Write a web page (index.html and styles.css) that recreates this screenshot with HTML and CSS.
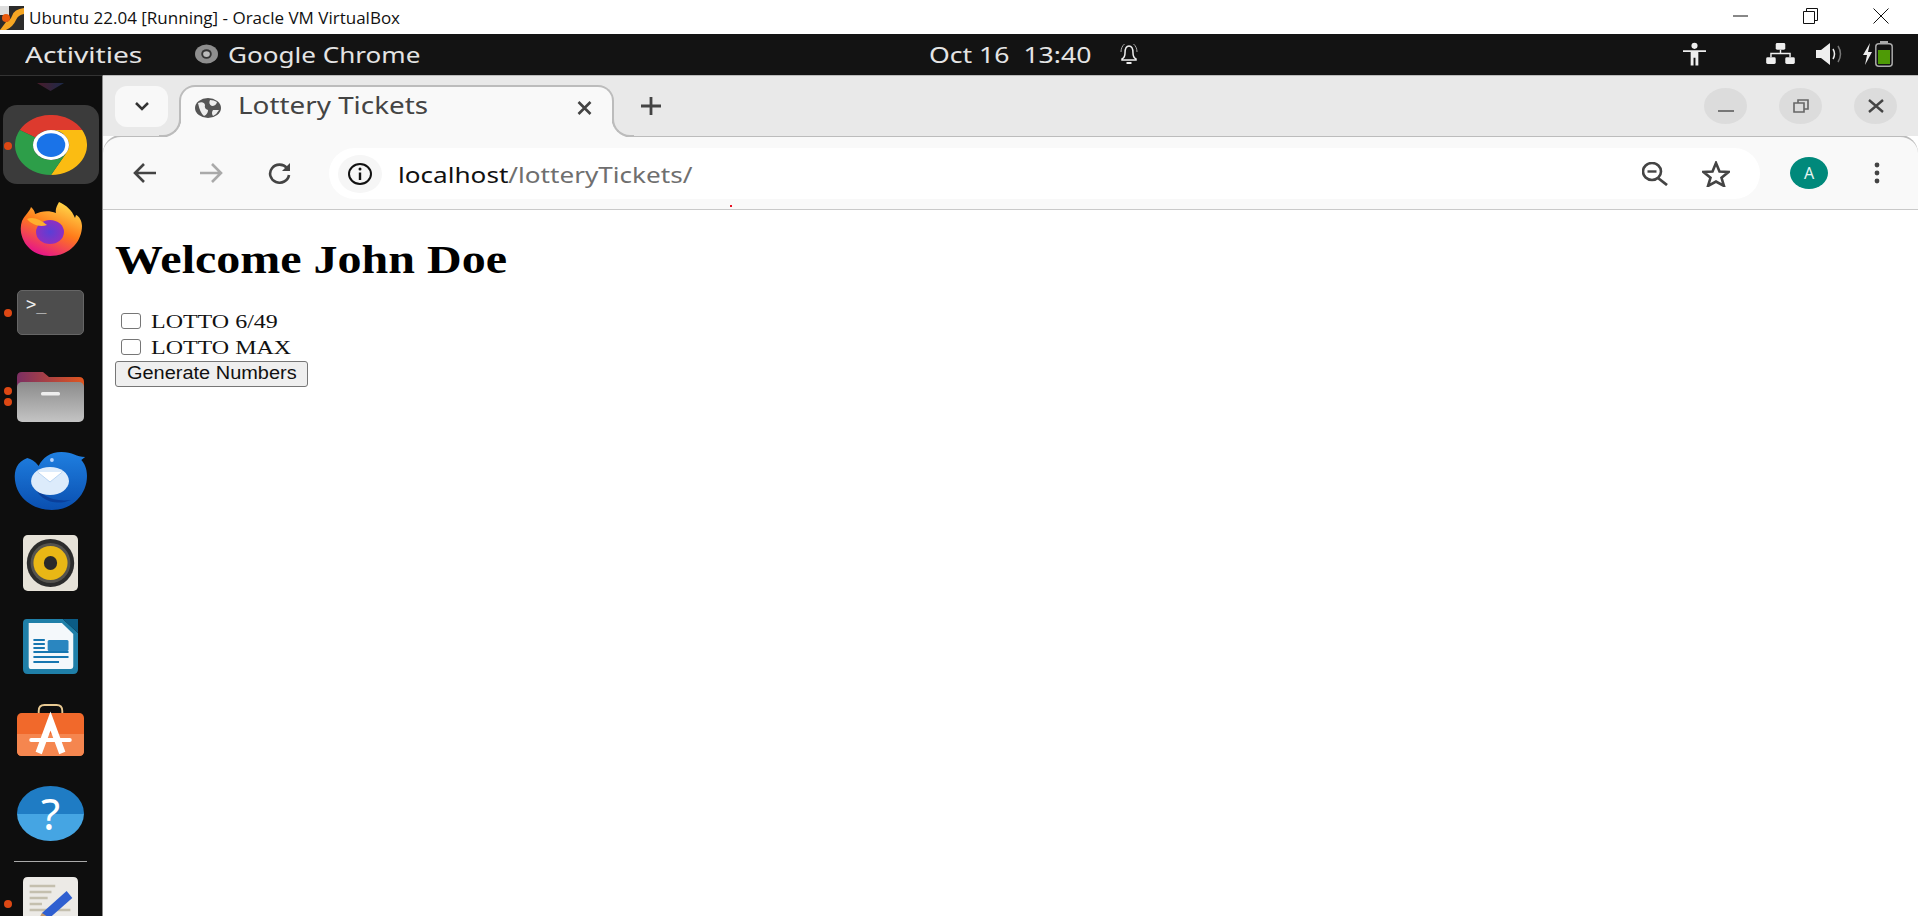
FILE: index.html
```html
<!DOCTYPE html>
<html lang="en">
<head>
<meta charset="utf-8">
<title>Ubuntu 22.04 [Running] - Oracle VM VirtualBox</title>
<link rel="stylesheet" href="styles.css">
</head>
<body>
<div class="screen">
  <header class="vbox-title">
    <svg class="vbox-logo" viewBox="0 0 24 24"><rect width="24" height="24" fill="#2b2b2b"/><rect width="9" height="9" fill="#ddd"/><path d="M0 24 L6 16 Q10 15 12 10 Q14 3 24 2 V8 Q18 9 16 14 Q13 21 6 24Z" fill="#f5a623"/><circle cx="6" cy="12" r="4" fill="#e8590c"/></svg>
    <span class="vbox-text">Ubuntu 22.04 [Running] - Oracle VM VirtualBox</span>
    <div class="vbox-controls">
      <svg class="vbox-ctl" viewBox="0 0 16 16"><path d="M0 8H15" stroke="#111" fill="none"/></svg>
      <svg class="vbox-ctl" viewBox="0 0 16 16"><path d="M.5 3.5H11.5V15.5H.5ZM3.5 3.5V.5H14.5V12.5H11.5" stroke="#111" fill="none"/></svg>
      <svg class="vbox-ctl" viewBox="0 0 16 16"><path d="M.5.5L15.5 15.5M15.5.5L.5 15.5" stroke="#111" fill="none"/></svg>
    </div>
  </header>

  <div class="topbar">
    <div class="tb-cell"><span class="wide tb-activities">Activities</span></div>
    <div class="tb-cell tb-app">
      <svg class="tb-chrome" viewBox="0 0 24 20"><ellipse cx="12" cy="10" rx="12" ry="10" fill="#8e8e8e"/><ellipse cx="12" cy="10" rx="5.5" ry="5" fill="#333"/><ellipse cx="12" cy="10" rx="3.5" ry="3" fill="#bbb"/></svg>
      <span class="wide tb-appname">Google Chrome</span>
    </div>
    <div class="tb-cell tb-clock">
      <span class="wide tb-time">Oct 16&nbsp;&nbsp;13:40</span>
      <svg class="tb-bell" viewBox="0 0 20 22"><path d="M10 3C6.500 3 6 6 6 10C6 13 5 15 3 16V17H17V16C15 15 14 13 14 10C14 6 13.500 3 10 3Z" fill="none" stroke="#eee" stroke-width="1.500"/><path d="M2 9C2 6 3 3 5.500 1M18 9C18 6 17 3 14.500 1" fill="none" stroke="#aaa"/><path d="M7.500 20H12.500" stroke="#eee" stroke-width="2"/></svg>
    </div>
    <div class="tb-status">
      <svg class="tb-a11y" viewBox="0 0 24 24"><circle cx="12" cy="3.500" r="3.200" fill="#eee"/><path d="M0 8H24V10H16V24H13V16H11V24H8V10H0Z" fill="#eee"/></svg>
      <svg class="tb-net" viewBox="0 0 30 22"><rect x="10" y="0" width="10" height="7" rx="1.500" fill="#eee"/><rect x="0" y="15" width="10" height="7" rx="1.500" fill="#eee"/><rect x="20" y="15" width="10" height="7" rx="1.500" fill="#eee"/><path d="M15 7V11M5 15V11H25V15" stroke="#eee" stroke-width="1.500" fill="none"/></svg>
      <svg class="tb-vol" viewBox="0 0 27 22"><path d="M0 7H5L14 0V22L5 15H0Z" fill="#eee"/><path d="M17 6Q20 11 17 16" stroke="#eee" stroke-width="1.500" fill="none"/><path d="M22 3Q27 11 22 19" stroke="#777" stroke-width="1.500" fill="none"/></svg>
      <svg class="tb-batt" viewBox="0 0 30 26"><path d="M7 2L0 14H4L2 24L9 11H5Z" fill="#eee"/><rect x="12.800" y="2.800" width="16.400" height="22.400" rx="3" fill="none" stroke="#aaa" stroke-width="1.500"/><rect x="17" y="0" width="8" height="3" fill="#aaa"/><rect x="15" y="9" width="12" height="14" fill="#4e9a06"/></svg>
    </div>
  </div>

  <div class="desk">
    <nav class="dock">
      <div class="dock-stub"></div>
      <div class="dock-slot active">
        <i class="dot"></i>
        <svg class="ic-chrome" viewBox="0 0 48 48" preserveAspectRatio="none">
          <path d="M3.200 12A24 24 0 0 1 44.800 12H24A12 12 0 0 0 13.600 18Z" fill="#dd3a2e"/>
          <path d="M44.800 12A24 24 0 0 1 24 48L34.400 30A12 12 0 0 0 24 12Z" fill="#fbbc12"/>
          <path d="M3.200 12A24 24 0 0 0 24 48L34.400 30A12 12 0 0 1 13.600 18Z" fill="#2d9e49"/>
          <circle cx="24" cy="24" r="12" fill="#fff"/><circle cx="24" cy="24" r="9.500" fill="#1a73e8"/>
        </svg>
      </div>
      <div class="dock-slot">
        <svg class="ic-firefox" viewBox="0 0 63 54" preserveAspectRatio="none">
          <defs>
            <linearGradient id="ffa" x1="0.800" y1="0" x2="0.300" y2="1"><stop offset="0" stop-color="#ffe14d"/><stop offset=".5" stop-color="#ff7a1a"/><stop offset="1" stop-color="#e5108f"/></linearGradient>
            <radialGradient id="ffb"><stop offset="0" stop-color="#5a3fd6"/><stop offset="1" stop-color="#8f2fc0"/></radialGradient>
          </defs>
          <path d="M40 0C38 4 36 7 37 11C30 8 22 9 16 12C16 9 14 7 12 5C11 9 6 13 3 19C-2 33 8 54 31 54C52 54 63 38 63 24C63 19 60 14 57 13L56 16C53 8 47 3 40 0Z" fill="url(#ffa)"/>
          <ellipse cx="31" cy="30" rx="14" ry="12" fill="url(#ffb)"/>
          <path d="M8 17C14 14 22 18 28 23C22 25 14 24 8 17Z" fill="#ffb02e"/>
        </svg>
      </div>
      <div class="dock-slot">
        <i class="dot"></i>
        <div class="ic-term"><span>&gt;_</span></div>
      </div>
      <div class="dock-slot">
        <i class="dot dot-a"></i><i class="dot dot-b"></i>
        <svg class="ic-folder" viewBox="0 0 67 50" preserveAspectRatio="none">
          <defs>
            <linearGradient id="fdb" x1="0" y1="0" x2="1" y2="0"><stop offset="0" stop-color="#7b2f63"/><stop offset="1" stop-color="#e0561f"/></linearGradient>
            <linearGradient id="fdf" x1="0" y1="0" x2="0" y2="1"><stop offset="0" stop-color="#8b8b8b"/><stop offset="1" stop-color="#c4c4c4"/></linearGradient>
          </defs>
          <path d="M0 5Q0 0 5 0H26L32 5H62Q67 5 67 10V30H0Z" fill="url(#fdb)"/>
          <rect y="10" width="67" height="40" rx="5" fill="url(#fdf)"/>
          <rect x="24" y="20" width="19" height="3.500" rx="1.500" fill="#eee"/>
        </svg>
      </div>
      <div class="dock-slot">
        <svg class="ic-bird" viewBox="0 0 77 58" preserveAspectRatio="none">
          <defs><linearGradient id="tbg" x1="0" y1="0" x2="0" y2="1"><stop offset="0" stop-color="#1f7fe0"/><stop offset="1" stop-color="#0a4fb0"/></linearGradient></defs>
          <path d="M14 6C3 10 0 18 1 28C3 46 20 58 40 58C62 58 77 42 77 24C77 16 74 11 71 8L75 5C66 5 62 0 50 0C38 0 30 6 26 14C22 9 18 7 14 6Z" fill="url(#tbg)"/>
          <path d="M20 30C25 50 45 54 60 48C40 50 28 44 20 30Z" fill="#0a3f9a"/>
          <ellipse cx="38" cy="29" rx="20" ry="14" fill="#dcebfb"/>
          <path d="M25 20L38 30L51 20" fill="#fff" stroke="#b8d4f2"/>
          <circle cx="40" cy="8" r="2" fill="#b9d6ff"/>
        </svg>
      </div>
      <div class="dock-slot">
        <svg class="ic-rhythm" viewBox="0 0 58 56" preserveAspectRatio="none">
          <rect width="58" height="56" rx="5" fill="#e6e2d8"/>
          <ellipse cx="29" cy="28" rx="25" ry="24" fill="#2c2c2c"/>
          <ellipse cx="29" cy="28" rx="21" ry="20" fill="#55534e"/>
          <ellipse cx="29" cy="28" rx="18" ry="17" fill="#e9b715"/>
          <ellipse cx="29" cy="28" rx="7" ry="7" fill="#2a2a2a"/>
        </svg>
      </div>
      <div class="dock-slot">
        <svg class="ic-writer" viewBox="0 0 58 55" preserveAspectRatio="none">
          <path d="M4 0H42L58 14V50Q58 55 53 55H5Q0 55 0 50V4Q0 0 4 0Z" fill="#1f7fa8"/>
          <path d="M42 0H58V14Z" fill="#0b5c86"/>
          <path d="M6 4H41L53 15V47Q53 50 50 50H8Q6 50 6 47Z" fill="#f4f8fb"/>
          <rect x="26" y="21" width="22" height="11" rx="1.500" fill="#2a86c0"/>
          <path d="M11 21H23M11 25H23M11 29H23M11 33H48M11 38H48M11 43H38" stroke="#1676b0" stroke-width="2"/>
        </svg>
      </div>
      <div class="dock-slot">
        <svg class="ic-store" viewBox="0 0 71 52" preserveAspectRatio="none">
          <path d="M23 11V7Q23 1 29 1H42Q48 1 48 7V11" fill="none" stroke="#e8c992" stroke-width="2"/>
          <rect y="9" width="71" height="43" rx="5" fill="#f1692b"/>
          <path d="M0 30H71V47Q71 52 66 52H5Q0 52 0 47Z" fill="#f5864f"/>
          <path d="M23 49L35.500 17L48 49" fill="none" stroke="#fff" stroke-width="7"/>
          <rect x="13" y="34" width="45" height="4" rx="2" fill="#fff"/>
        </svg>
      </div>
      <div class="dock-slot">
        <div class="ic-help">?</div>
      </div>
      <hr class="dock-sep">
      <div class="dock-slot dock-last">
        <i class="dot"></i>
        <svg class="ic-editor" viewBox="0 0 58 41" preserveAspectRatio="none">
          <path d="M5 0H53Q58 0 58 5V41H0V5Q0 0 5 0Z" fill="#eceae6"/>
          <path d="M7 9H34M7 15H30M7 21H26M7 27H20M7 33H50" stroke="#c4bfae" stroke-width="2.500"/>
          <path d="M46 14L52 21L28 41H20V36Z" fill="#2f5fd0"/>
          <path d="M20 36L28 41H17Z" fill="#c79a6a"/>
        </svg>
      </div>
    </nav>

    <main class="browser">
      <div class="tabstrip">
        <button class="tab-search"><svg viewBox="0 0 16 10"><path d="M2 2L8 8L14 2" fill="none" stroke="#333" stroke-width="2.500"/></svg></button>
        <div class="tab">
          <svg class="tab-globe" viewBox="0 0 26 20" preserveAspectRatio="none"><ellipse cx="13" cy="10" rx="13" ry="10" fill="#555"/><path d="M3 5Q9 3 10 7Q9 11 13 12Q13 16 9 18Q5 15 3 5ZM15 2Q19 2 22 4Q21 8 17 8Q13 6 15 2ZM18 12H24Q22 16 18 18Q16 15 18 12Z" fill="#eee"/></svg>
          <span class="wide tab-title">Lottery Tickets</span>
          <svg class="tab-x" viewBox="0 0 16 14"><path d="M2 1L14 13M14 1L2 13" stroke="#444" stroke-width="2.600"/></svg>
        </div>
        <svg class="tab-new" viewBox="0 0 20 18"><path d="M10 0V18M0 9H20" stroke="#444" stroke-width="2.800"/></svg>
        <div class="win-btns">
          <span class="win-btn"><svg viewBox="0 0 16 16"><path d="M0 13H16" stroke="#777" stroke-width="2"/></svg></span>
          <span class="win-btn"><svg viewBox="0 0 16 16"><path d="M1 5H11V14H1ZM5 5V2H15V11H11" fill="none" stroke="#666" stroke-width="1.600"/></svg></span>
          <span class="win-btn"><svg viewBox="0 0 16 16"><path d="M1 2L15 14M15 2L1 14" stroke="#444" stroke-width="2.400"/></svg></span>
        </div>
      </div>

      <div class="toolbar">
        <svg class="nav nav-back" viewBox="0 0 23 22"><path d="M23 11H3M11 2L2 11L11 20" fill="none" stroke="#444" stroke-width="2.600"/></svg>
        <svg class="nav nav-fwd" viewBox="0 0 23 22"><path d="M0 11H20M12 2L21 11L12 20" fill="none" stroke="#aaa" stroke-width="2.600"/></svg>
        <svg class="nav nav-reload" viewBox="0 0 23 22"><path d="M19 6A9.500 9 0 1 0 21 13" fill="none" stroke="#444" stroke-width="2.600"/><path d="M22 1V9H14Z" fill="#444"/></svg>
        <div class="omnibox">
          <span class="site-info"><svg viewBox="0 0 24 22"><ellipse cx="12" cy="11" rx="11" ry="10" fill="none" stroke="#111" stroke-width="2"/><path d="M12 9.500V17" stroke="#111" stroke-width="2.400"/><circle cx="12" cy="6" r="1.500" fill="#111"/></svg></span>
          <span class="wide url"><b>localhost</b>/lotteryTickets/</span>
          <svg class="omni-zoom" viewBox="0 0 26 24"><ellipse cx="10" cy="9.500" rx="9" ry="8.500" fill="none" stroke="#444" stroke-width="2.600"/><path d="M5.500 9.500H14.500" stroke="#444" stroke-width="2.400"/><path d="M16 16L25 23" stroke="#444" stroke-width="2.800"/></svg>
          <svg class="omni-star" viewBox="0 0 28 26"><path d="M14 2L17.500 10.500L26.500 11L19.500 16.800L22 25L14 20.500L6 25L8.500 16.800L1.500 11L10.500 10.500Z" fill="none" stroke="#444" stroke-width="2.600"/></svg>
        </div>
        <span class="avatar">A</span>
        <svg class="menu" viewBox="0 0 6 22"><circle cx="3" cy="3" r="2.400" fill="#444"/><circle cx="3" cy="11" r="2.400" fill="#444"/><circle cx="3" cy="19" r="2.400" fill="#444"/></svg>
        <i class="red-speck"></i>
      </div>

      <section class="page">
        <h1><span class="wide page-title">Welcome John Doe</span></h1>
        <form class="lotto-form">
          <label class="lotto-row"><input type="checkbox"><span class="wide lotto-name">LOTTO 6/49</span></label>
          <label class="lotto-row"><input type="checkbox"><span class="wide lotto-name">LOTTO MAX</span></label>
          <button type="button" class="gen"><span class="wide gen-text">Generate Numbers</span></button>
        </form>
      </section>
    </main>
  </div>
</div>
</body>
</html>
```
FILE: styles.css
```css
* { box-sizing: border-box; }
html, body { margin: 0; padding: 0; height: 100%; overflow: hidden; background: #fff; }
svg { display: block; flex: none; }
.screen { width: 1918px; height: 916px; display: flex; flex-direction: column; overflow: hidden; }

/* The guest display is stretched sideways by the VM window */
.wide { display: inline-block; transform-origin: left center; white-space: nowrap; }

/* VirtualBox title bar */
.vbox-title { height: 34px; flex: none; display: flex; align-items: center; background: #fff; padding-top: 1px; }
.vbox-logo { width: 24px; height: 24px; }
.vbox-text { margin-left: 5px; font: 17px/1 "Open Sans", sans-serif; color: #111; white-space: nowrap; }
.vbox-controls { margin-left: auto; display: flex; gap: 54px; padding-right: 29px; margin-top: -3px; }
.vbox-ctl { width: 16px; height: 16px; }

/* GNOME top bar */
.topbar { height: 41px; flex: none; background: #131313; color: #e4e4e4; display: grid; grid-template-columns: 195px 734px 210px 1fr; align-items: center; padding-bottom: 2px; font: 22px/1 "Noto Sans", sans-serif; }
.tb-cell { display: flex; align-items: center; min-width: 0; }
.tb-activities { margin-left: 25px; transform: scaleX(1.28); }
.tb-app { gap: 10px; }
.tb-appname { transform: scaleX(1.185); }
.tb-chrome { width: 23px; height: 20px; }
.tb-time { width: 160px; transform: scaleX(1.21); }
.tb-bell { width: 20px; height: 22px; margin-left: 30px; }
.tb-status { display: flex; align-items: center; justify-content: flex-end; padding-right: 25px; }
.tb-a11y { width: 23px; height: 24px; margin-right: 60px; }
.tb-net { width: 29px; height: 21px; margin-right: 21px; }
.tb-vol { width: 27px; height: 22px; margin-right: 20px; }
.tb-batt { width: 30px; height: 26px; }

.desk { flex: 1; min-height: 0; display: flex; }

/* Dock */
.dock { width: 103px; flex: none; background: #0e0e0e; border-right: 1px solid #8a8a8a; padding-top: 28px; display: flex; flex-direction: column; position: relative; overflow: hidden; border-top: 1px solid #333; }
.dock-stub { position: absolute; left: 37px; top: 7px; width: 27px; height: 8px; background: linear-gradient(90deg, #4a1c2a, #1c2a4a); clip-path: polygon(0 0, 100% 0, 50% 100%); }
.dock-slot { position: relative; height: 83.500px; flex: none; display: flex; align-items: center; justify-content: center; padding-right: 1px; }
.dock-slot.active::before { content: ""; position: absolute; left: 3px; right: 3px; top: 1px; height: 79px; background: #3b3b3b; border-radius: 14px; }
.dock-slot > svg, .dock-slot > div { position: relative; }
.dot { position: absolute; z-index: 1; left: 4px; top: calc(50% - 4px); width: 8px; height: 8px; border-radius: 50%; background: #dd4814; }
.dot-a { top: calc(50% - 9px); }
.dot-b { top: calc(50% + 2px); }
.ic-chrome { width: 72px; height: 60px; margin-top: -2px; }
.ic-firefox { width: 63px; height: 54px; }
.ic-term { width: 67px; height: 45px; border-radius: 5px; background: #4d4d4d; border: 1px solid #666; color: #eee; font: 17px/1 "DejaVu Sans Mono", monospace; padding: 5px 0 0 8px; }
.ic-folder { width: 67px; height: 50px; margin-top: 2px; }
.ic-bird { width: 73px; height: 58px; margin-top: 2px; }
.ic-rhythm { width: 55px; height: 56px; }
.ic-writer { width: 55px; height: 55px; }
.ic-store { width: 67px; height: 52px; }
.ic-help { width: 67px; height: 55px; border-radius: 50%; background: linear-gradient(#1f7cc4 50%, #45a5e3 50%); color: #fff; font: 44px/55px "Noto Sans", sans-serif; text-align: center; }
.dock-sep { margin: 5px 0 0 14px; height: 1px; border: 0; background: #aaa; flex: none; width: 73px; }
.dock-last { align-items: flex-start; margin-top: 15px; height: 41px; }
.dock-last .dot { top: 23px; }
.ic-editor { width: 55px; height: 41px; }

/* Browser */
.browser { flex: 1; min-width: 0; display: flex; flex-direction: column; background: #fff; }
.tabstrip { height: 61px; flex: none; background: #e9e9e9; display: flex; align-items: center; padding-left: 12px; position: relative; z-index: 2; border-top: 1px solid #bbb; }
.tab-search { width: 53px; height: 41px; border: 0; border-radius: 12px; background: #f8f8f8; display: flex; align-items: center; justify-content: center; padding: 0; }
.tab-search svg { width: 16px; height: 10px; }
.tab { position: relative; align-self: flex-end; margin: 0 0 -2px 11px; width: 435px; height: 53px; background: #f9f9f9; border: 2px solid #bcbcbc; border-bottom: 0; border-radius: 16px 16px 0 0; display: flex; align-items: center; padding: 0 19px 9px 14px; }
.tab::before, .tab::after { content: ""; position: absolute; bottom: 1px; width: 20px; height: 20px; border: 2px solid #bcbcbc; }
.tab::before { left: -22px; border-width: 0 2px 2px 0; border-bottom-right-radius: 18px; box-shadow: 8px 8px 0 #f9f9f9; }
.tab::after { right: -22px; border-width: 0 0 2px 2px; border-bottom-left-radius: 18px; box-shadow: -8px 8px 0 #f9f9f9; }
.tab-globe { width: 26px; height: 20px; }
.tab-title { margin: -5px 0 0 17px; font: 23px/1 "Noto Sans", sans-serif; color: #444; transform: scaleX(1.21); }
.tab-x { width: 17px; height: 14px; margin-left: auto; }
.tab-new { width: 20px; height: 18px; margin-left: 27px; }
.win-btns { margin-left: auto; display: flex; gap: 32px; padding-right: 21px; }
.win-btn { width: 43px; height: 36px; border-radius: 50%; background: #dcdcdc; display: flex; align-items: center; justify-content: center; }
.win-btn svg { width: 16px; height: 16px; }

.toolbar { height: 75px; flex: none; background: #f9f9f9; border-top: 2px solid #bcbcbc; border-bottom: 1px solid #c9c9c9; border-radius: 18px 18px 0 0; display: flex; align-items: center; position: relative; margin-top: -1px; }
.nav { width: 23px; height: 22px; position: absolute; top: 25px; }
.nav-back { left: 30px; }
.nav-fwd { left: 97px; }
.nav-reload { left: 165px; }
.omnibox { position: absolute; left: 226px; top: 11px; width: 1431px; height: 51px; background: #fff; border-radius: 26px; display: flex; align-items: center; padding-left: 9px; }
.site-info { width: 44px; height: 38px; border-radius: 50%; background: #f6f6f6; display: flex; align-items: center; justify-content: center; }
.site-info svg { width: 24px; height: 22px; }
.url { margin-left: 16px; font: 22px/1 "Noto Sans", sans-serif; color: #6f6f6f; transform: scaleX(1.187); }
.url b { font-weight: 400; color: #111; }
.omni-zoom { width: 26px; height: 24px; margin-left: auto; }
.omni-star { width: 28px; height: 26px; margin: 0 30px 0 34px; }
.avatar { position: absolute; left: 1687px; top: 20px; width: 38px; height: 32px; border-radius: 50%; background: #00897b; color: #e6f4f2; font: 16px/32px "Noto Sans", sans-serif; text-align: center; }
.menu { position: absolute; left: 1771px; top: 25px; width: 6px; height: 22px; }
.red-speck { position: absolute; left: 627px; top: 68px; width: 2px; height: 2px; background: #e81123; }

/* Page */
.page { flex: 1; padding: 0 0 0 12px; color: #000; font-family: "Liberation Serif", serif; }
.page h1 { margin: 25px 0 24px; font: 700 40px/50px "Liberation Serif", serif; }
.page-title { transform: scaleX(1.2); }
.lotto-form { display: flex; flex-direction: column; align-items: flex-start; }
.lotto-row { display: flex; align-items: center; height: 26px; font-size: 19.500px; padding-left: 5px; color: #111; }
.lotto-row input { appearance: none; width: 20px; height: 16px; margin: -2px 10px 0 1px; border: 1.500px solid #767676; border-radius: 3px; background: #fff; }
.lotto-name { transform: scaleX(1.23); }
.gen { height: 26px; width: 193px; padding: 0 0 0 11px; background: #efefef; border: 1.500px solid #767676; border-radius: 3px; font: 17.500px/1 "Liberation Sans", sans-serif; color: #111; text-align: left; }
.gen-text { transform: scaleX(1.14); }
```
